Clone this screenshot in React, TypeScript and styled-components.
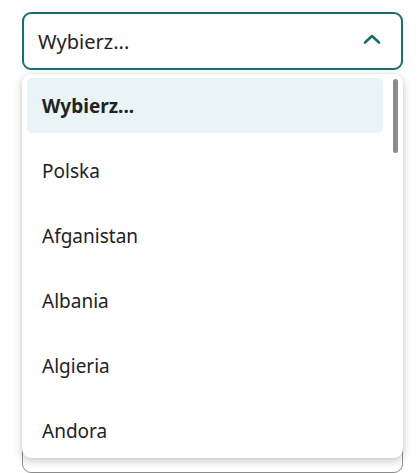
import React from "react";
import styled, { createGlobalStyle } from "styled-components";

const GlobalStyle = createGlobalStyle`
  html, body {
    margin: 0;
    padding: 0;
    background: #ffffff;
    font-family: "Noto Sans", "Open Sans", sans-serif;
    color: #222222;
  }
`;

const countries = ["Polska", "Afganistan", "Albania", "Algieria", "Andora"];

export default function App(): JSX.Element {
  return (
    <>
      <GlobalStyle />
      <Page>
        <SelectWrap>
          <Trigger>
            <TriggerLabel>Wybierz...</TriggerLabel>
            <Chevron width="18" height="10" viewBox="0 0 18 10" fill="none">
              <path
                d="M2 8.5 L9 2 L16 8.5"
                stroke="#16706f"
                strokeWidth="2.6"
                strokeLinecap="round"
                strokeLinejoin="round"
              />
            </Chevron>
          </Trigger>
          <Menu>
            <Option $selected>Wybierz...</Option>
            {countries.map((name) => (
              <Option key={name}>{name}</Option>
            ))}
            <Scrollbar />
          </Menu>
        </SelectWrap>
        <NextField />
      </Page>
    </>
  );
}

const Page = styled.div`
  padding: 12px 15px 0 22px;
  height: 473px;
  box-sizing: border-box;
  overflow: hidden;
`;

const SelectWrap = styled.div`
  position: relative;
  z-index: 2;
`;

const Trigger = styled.div`
  display: flex;
  align-items: center;
  justify-content: space-between;
  height: 58px;
  box-sizing: border-box;
  padding: 0 20px 0 14px;
  border: 2px solid #16706f;
  border-radius: 9px;
  background: #ffffff;
`;

const TriggerLabel = styled.span`
  font-size: 20px;
  color: #222222;
`;

const Chevron = styled.svg`
  display: block;
  margin-top: -4px;
`;

const Menu = styled.div`
  position: absolute;
  top: calc(100% + 4px);
  left: 0;
  right: 0;
  height: 384px;
  box-sizing: border-box;
  padding: 4px 20px 0 5px;
  display: flex;
  flex-direction: column;
  gap: 10px;
  background: #ffffff;
  border-radius: 9px;
  box-shadow: 0 3px 10px rgba(0, 0, 0, 0.22), 0 0 2px rgba(0, 0, 0, 0.08);
  overflow: hidden;
`;

const Option = styled.div<{ $selected?: boolean }>`
  flex: 0 0 55px;
  display: flex;
  align-items: center;
  padding: 0 15px;
  border-radius: 5px;
  font-size: 19px;
  font-weight: ${({ $selected }) => ($selected ? 700 : 400)};
  color: #222222;
  background: ${({ $selected }) => ($selected ? "#eaf3f5" : "transparent")};
`;

const Scrollbar = styled.div`
  position: absolute;
  top: 5px;
  right: 5px;
  width: 5px;
  height: 74px;
  border-radius: 3px;
  background: #8c8c8c;
`;

const NextField = styled.div`
  margin-top: 360px;
  height: 43px;
  box-sizing: border-box;
  border: 1px solid #8c8c8c;
  border-radius: 9px;
`;
